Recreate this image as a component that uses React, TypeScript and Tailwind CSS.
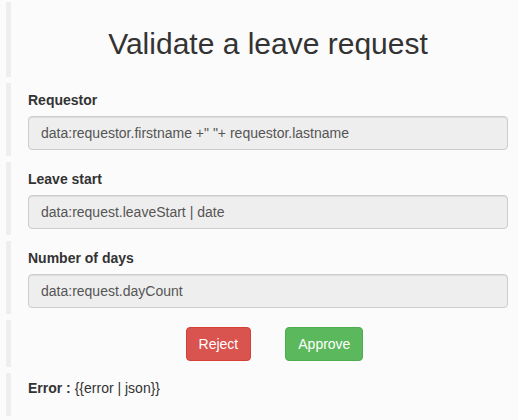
import React from "react";

type Field = { label: string; value: string };

const fields: Field[] = [
  { label: "Requestor", value: 'data:requestor.firstname +" "+ requestor.lastname' },
  { label: "Leave start", value: "data:request.leaveStart | date" },
  { label: "Number of days", value: "data:request.dayCount" },
];

function Block({ className = "", children }: { className?: string; children: React.ReactNode }) {
  return (
    <div className={`ml-[6px] mr-[10px] border-l-[5px] border-[#eeeeee] pl-[17px] ${className}`}>
      {children}
    </div>
  );
}

export default function App() {
  return (
    <div
      className="min-h-[420px] w-[518px] bg-[#fbfbfb] pt-[2px] text-[14px] text-[#333333]"
      style={{ fontFamily: '"Liberation Sans", Arial, sans-serif' }}
    >
      <Block className="pt-[25px] pb-[17px]">
        <h1 className="text-center text-[30px] leading-[33px] font-normal text-[#333333]">
          Validate a leave request
        </h1>
      </Block>

      {fields.map((f) => (
        <Block key={f.label} className="mt-[6px] pt-[7px] pb-[6px]">
          <label className="block font-bold leading-5 mb-[6px]">{f.label}</label>
          <div className="h-[34px] rounded border border-[#cccccc] bg-[#eeeeee] px-3 leading-[32px] text-[#555555] shadow-[inset_0_1px_1px_rgba(0,0,0,0.075)]">
            {f.value}
          </div>
        </Block>
      ))}

      <Block className="mt-[6px] pt-[7px] pb-[6px]">
        <div className="flex justify-center gap-[34px] pl-[13px]">
          <button className="h-[34px] rounded border border-[#d43f3a] bg-[#d9534f] px-3 text-white">
            Reject
          </button>
          <button className="h-[34px] rounded border border-[#4cae4c] bg-[#5cb85c] px-3 text-white">
            Approve
          </button>
        </div>
      </Block>

      <Block className="mt-[6px] pt-[5px] pb-[18px]">
        <p className="leading-5">
          <span className="font-bold">Error :</span> {"{{error | json}}"}
        </p>
      </Block>
    </div>
  );
}
